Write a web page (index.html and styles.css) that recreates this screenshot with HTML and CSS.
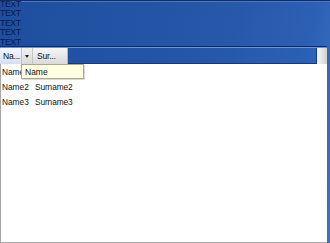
FILE: index.html
```html
<!DOCTYPE html>
<html>
<head>
<meta charset="utf-8">
<link rel="stylesheet" href="styles.css">
</head>
<body>
<div class="page">
  <div class="top">
    <div>TEXT</div>
    <div>TEXT</div>
    <div>TEXT</div>
    <div>TEXT</div>
    <div>TEXT</div>
  </div>
  <div class="grid">
    <div class="header">
      <div class="hc hc-name">Na...</div>
      <div class="hc hc-arrow"><span class="tri"></span></div>
      <div class="hc hc-sur">Sur...</div>
      <div class="hc-fill"></div>
      <div class="hc-corner"></div>
    </div>
    <div class="body">
      <div class="row row-covered"><span class="c1">Name1</span><span class="c2">Surname1</span></div>
      <div class="row"><span class="c1">Name2</span><span class="c2">Surname2</span></div>
      <div class="row"><span class="c1">Name3</span><span class="c2">Surname3</span></div>
      <div class="popup">Name</div>
    </div>
  </div>
</div>
</body>
</html>
```
FILE: styles.css
```css
html, body {
  margin: 0;
  padding: 0;
}
body {
  width: 330px;
  height: 243px;
  overflow: hidden;
  background: linear-gradient(100deg, #1f4e9e 0%, #2556a7 55%, #2c60b4 85%, #3c72c6 100%);
  font-family: "Liberation Sans", Arial, sans-serif;
}
.page {
  display: flex;
  flex-direction: column;
  height: 243px;
}
.top {
  height: 46px;
  font-size: 8.8px;
  line-height: 9.4px;
  color: #071b4a;
  letter-spacing: -0.45px;
  box-shadow: inset 0 1px 0 #0f2e66, inset 0 2px 0 #4a78c4;
}
.grid {
  width: 327px;
  flex: 1;
  display: flex;
  flex-direction: column;
  border-top: 1px solid #0d2b63;
  position: relative;
}
.header {
  display: flex;
  height: 16px;
  border-top: 1px solid #6a93d6;
  font-size: 8.5px;
  color: #111;
}
.hc {
  display: flex;
  align-items: center;
  box-sizing: border-box;
  height: 16px;
}
.hc-name {
  width: 22px;
  padding-left: 3px;
  background: linear-gradient(#f4f8fd, #d3e0f3);
  border-right: 1px solid #b9c6da;
  letter-spacing: -0.2px;
}
.hc-arrow {
  width: 11px;
  justify-content: center;
  background: linear-gradient(#f2f2f2, #d9d9d9);
  border-right: 1px solid #c4c4c4;
}
.tri {
  width: 0;
  height: 0;
  border-left: 2.5px solid transparent;
  border-right: 2.5px solid transparent;
  border-top: 3px solid #222;
}
.hc-sur {
  width: 35px;
  padding-left: 4px;
  background: linear-gradient(#f6f6f6, #dadada);
  border-right: 1px solid #b5b5b5;
  letter-spacing: -0.2px;
}
.hc-fill {
  flex: 1;
  box-sizing: border-box;
  border-bottom: 1px solid #17397a;
  border-right: 1px solid #17397a;
}
.hc-corner {
  width: 10px;
  background: linear-gradient(90deg, #f4f4f4, #e2e2e2 60%, #cfcfcf);
}
.body {
  flex: 1;
  background: #ffffff;
  border-left: 1px solid #a7a7a7;
  border-bottom: 1px solid #a7a7a7;
  position: relative;
  font-size: 8.3px;
  color: #111;
}
.row {
  display: flex;
  height: 14px;
  align-items: center;
  padding-top: 1px;
}
.c1 {
  width: 33px;
  padding-left: 1px;
}
.c2 {
  letter-spacing: -0.1px;
}
.row-covered .c1 {
  width: 19px;
  margin-right: 14px;
  overflow: hidden;
  white-space: nowrap;
}
.row-covered .c2 {
  visibility: hidden;
}
.popup {
  position: absolute;
  left: 20px;
  top: 0;
  width: 63px;
  height: 15px;
  box-sizing: border-box;
  background: #ffffe1;
  border: 1px solid #a9a98f;
  box-shadow: 1px 1px 0 rgba(0,0,0,0.15);
  padding-left: 3px;
  display: flex;
  align-items: center;
  font-size: 8.5px;
  color: #111;
}
```
